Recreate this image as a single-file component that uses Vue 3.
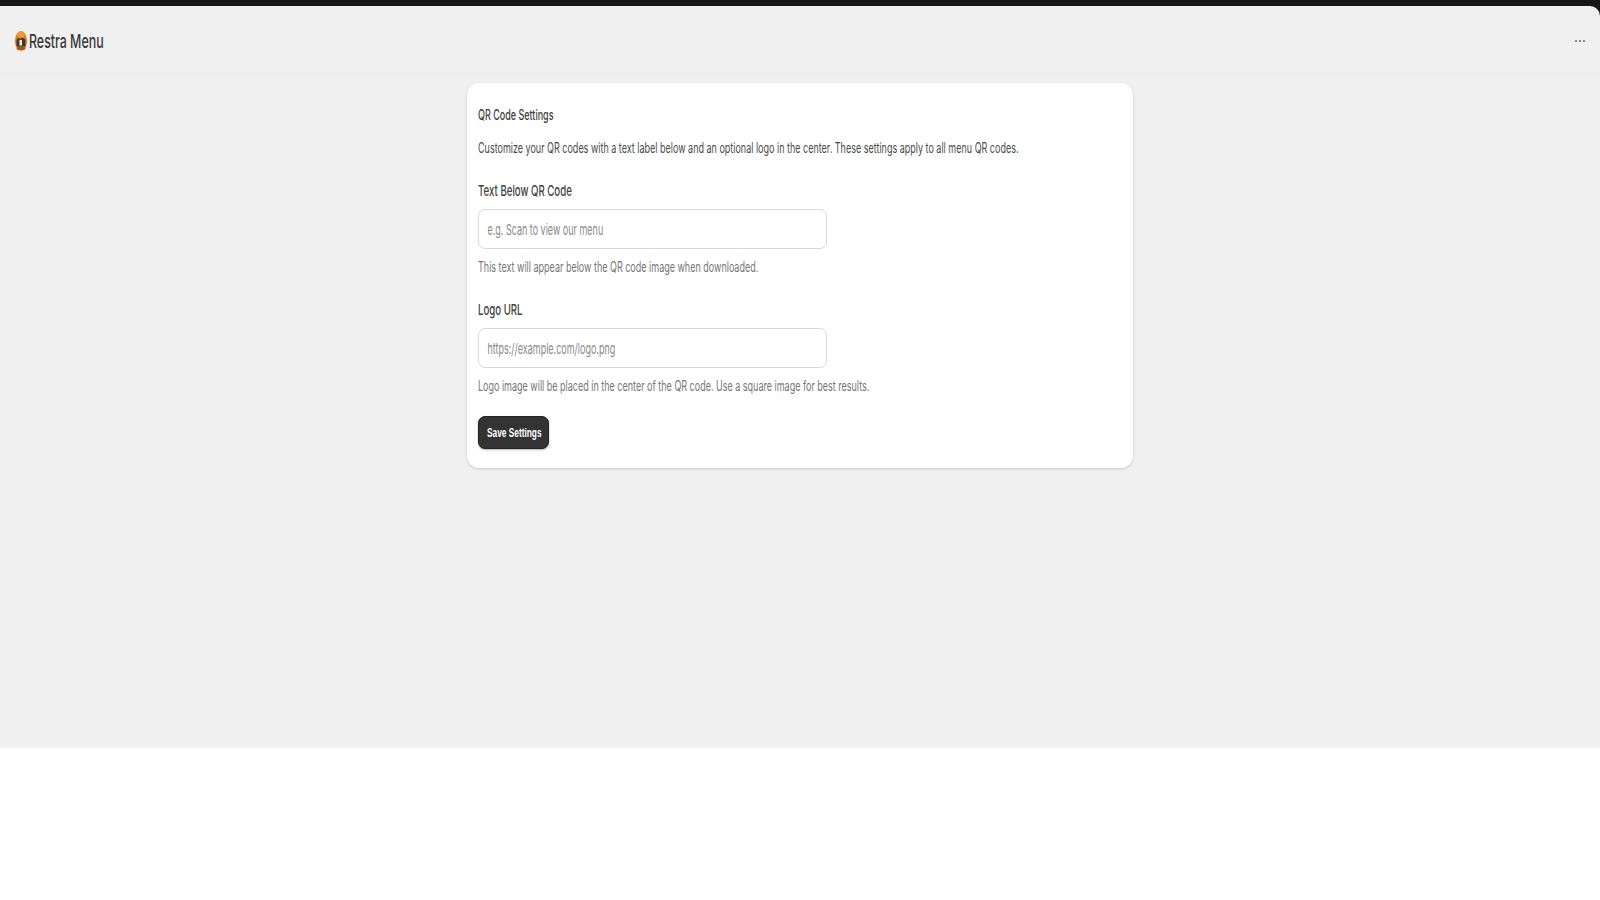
<template>
  <div class="shell">
    <div class="window">
      <div class="page">
        <header class="header">
          <div class="brand">
            <svg class="logo" viewBox="0 0 14 22" aria-hidden="true">
              <rect x="0.4" y="0.4" width="13.2" height="21.2" rx="5" fill="#f7efe2" />
              <ellipse cx="7" cy="11" rx="6" ry="10" fill="#d9781f" />
              <ellipse cx="7" cy="5" rx="3.8" ry="3.4" fill="#ec9a3a" />
              <path d="M2.6 16.5V9.5L5.6 7.2V10L8 7.2L11.4 9.5V16.5Z" fill="#3b3a38" />
              <rect x="5.4" y="10" width="2.6" height="5.5" fill="#e8e4dc" />
              <ellipse cx="7" cy="18.4" rx="4.4" ry="1.6" fill="#a9521a" />
            </svg>
            <span class="squeeze brand-name">Restra Menu</span>
          </div>
          <button class="more" type="button" aria-label="More">
            <i></i><i></i><i></i>
          </button>
        </header>

        <main class="main">
          <section class="card">
            <h2 class="squeeze title">QR Code Settings</h2>
            <p class="squeeze intro">
              Customize your QR codes with a text label below and an optional logo in the center. These settings apply to all menu QR codes.
            </p>

            <div v-for="field in fields" :key="field.label" class="field">
              <label class="squeeze label">{{ field.label }}</label>
              <div class="input-box">
                <input class="input" type="text" :placeholder="field.placeholder" />
              </div>
              <p class="squeeze hint">{{ field.hint }}</p>
            </div>

            <button class="save" type="button">
              <span class="squeeze save-text">Save Settings</span>
            </button>
          </section>
        </main>
      </div>
    </div>
  </div>
</template>

<script setup>
const fields = [
  {
    label: "Text Below QR Code",
    placeholder: "e.g. Scan to view our menu",
    hint: "This text will appear below the QR code image when downloaded.",
  },
  {
    label: "Logo URL",
    placeholder: "https://example.com/logo.png",
    hint: "Logo image will be placed in the center of the QR code. Use a square image for best results.",
  },
];
</script>

<style scoped>
.shell {
  width: 1600px;
  height: 900px;
  background: #fff;
  font-family: Inter, "Liberation Sans", sans-serif;
  overflow: hidden;
}

.window {
  padding-top: 6px;
  background: #171717;
}

.page {
  height: 742px;
  background: #f0f0f0;
  border-top-right-radius: 10px;
}

.header {
  height: 68px;
  box-sizing: border-box;
  border-bottom: 1px solid #ebebeb;
  display: flex;
  align-items: center;
  justify-content: space-between;
  padding: 3px 14px 0;
}

.brand {
  display: flex;
  align-items: center;
  gap: 1px;
}

.logo {
  width: 14px;
  height: 22px;
}

/* the whole reference is squashed sideways, so text gets the same squeeze */
.squeeze {
  display: block;
  white-space: nowrap;
  transform: scaleX(0.643);
  transform-origin: left center;
}

.brand-name {
  font-size: 19px;
  font-weight: 500;
  color: #383838;
  transform: scaleX(0.652);
}

.more {
  display: flex;
  gap: 1.5px;
  padding: 0;
  margin-right: 1px;
  background: none;
  border: none;
}

.more i {
  width: 2.5px;
  height: 2.5px;
  border-radius: 50%;
  background: #666;
}

.main {
  padding-top: 9px;
  display: flex;
  justify-content: center;
}

.card {
  width: 666px;
  height: 385px;
  box-sizing: border-box;
  padding: 23px 11px 0;
  background: #fff;
  border-radius: 12px;
  box-shadow: 0 1px 3px rgba(0, 0, 0, 0.16);
}

.title {
  margin: 0;
  font-size: 14px;
  line-height: 17px;
  font-weight: 500;
  color: #404040;
}

.intro {
  margin: 16px 0 0;
  font-size: 14px;
  line-height: 17px;
  color: #4a4a4a;
}

.field {
  margin-top: 26px;
}

.field + .field {
  margin-top: 26px;
}

.label {
  font-size: 15px;
  line-height: 17px;
  font-weight: 500;
  color: #404040;
}

.input-box {
  width: 349px;
  height: 40px;
  margin-top: 10px;
  box-sizing: border-box;
  border: 1px solid #d8d8d8;
  border-radius: 7px;
  overflow: hidden;
}

.input {
  display: block;
  width: 580px;
  height: 38px;
  box-sizing: border-box;
  padding: 0 14px;
  border: none;
  outline: none;
  background: transparent;
  font-family: inherit;
  font-size: 15px;
  transform: scaleX(0.6);
  transform-origin: left center;
}

.input::placeholder {
  color: #8a8a8a;
  opacity: 1;
}

.hint {
  margin: 10px 0 0;
  font-size: 14px;
  line-height: 16px;
  color: #757575;
}

.save {
  display: block;
  width: 71px;
  height: 33px;
  margin-top: 22px;
  padding: 0 8px;
  background: #333;
  border: 1px solid #222;
  border-radius: 7px;
  box-shadow: 0 1px 2px rgba(0, 0, 0, 0.3);
}

.save-text {
  font-family: inherit;
  font-size: 13px;
  font-weight: 600;
  line-height: 16px;
  color: #fff;
  transform: scaleX(0.64);
}
</style>
